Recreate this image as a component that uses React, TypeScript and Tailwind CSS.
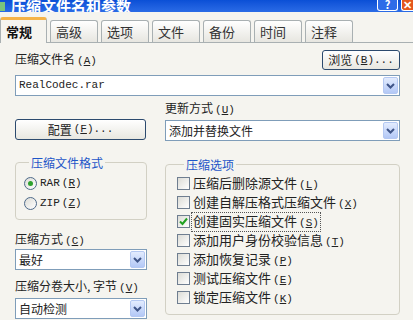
import React from "react";

const tabs = ["常规", "高级", "选项", "文件", "备份", "时间", "注释"];

const options: { label: string; k: string; checked?: boolean; focus?: boolean }[] = [
  { label: "压缩后删除源文件", k: "L" },
  { label: "创建自解压格式压缩文件", k: "X" },
  { label: "创建固实压缩文件", k: "S", checked: true, focus: true },
  { label: "添加用户身份校验信息", k: "T" },
  { label: "添加恢复记录", k: "P" },
  { label: "测试压缩文件", k: "E" },
  { label: "锁定压缩文件", k: "K" },
];

function Key({ k }: { k: string }) {
  return (
    <span className="ml-[2px] font-['Liberation_Mono',monospace] text-[11px]">
      (<span className="underline">{k}</span>)
    </span>
  );
}

function Chevron() {
  return (
    <svg width="9" height="6" viewBox="0 0 9 6">
      <path d="M1 1 L4.5 4.5 L8 1" fill="none" stroke="#3F5588" strokeWidth="2" />
    </svg>
  );
}

function Combo({ text, mono }: { text: string; mono?: boolean }) {
  return (
    <div className="flex h-[21px] items-center border border-[#7F9DB9] bg-white pl-[3px] pr-[1px]">
      <span
        className={
          "flex-1 truncate text-[#222] " +
          (mono ? "font-['Liberation_Mono',monospace] text-[11px]" : "text-[12px]")
        }
      >
        {text}
      </span>
      <span className="flex h-[17px] w-[15px] items-center justify-center rounded-[2px] border border-[#B4C8F2] bg-gradient-to-b from-[#E3ECFE] to-[#B3C8F6]">
        <Chevron />
      </span>
    </div>
  );
}

function XpButton({ label, k, className }: { label: string; k: string; className: string }) {
  return (
    <div
      className={
        "flex items-center justify-center rounded-[3px] border border-[#2C4A6E] bg-gradient-to-b from-white to-[#E8E7E0] text-[12px] text-[#222] " +
        className
      }
    >
      {label}
      <Key k={k} />
      <span className="font-['Liberation_Mono',monospace] text-[11px]">...</span>
    </div>
  );
}

function Radio({ label, k, on }: { label: string; k: string; on?: boolean }) {
  return (
    <div className="flex h-[20px] items-center">
      <span className="flex h-[13px] w-[13px] items-center justify-center rounded-full border border-[#4E6A8A] bg-gradient-to-br from-[#DCDCD6] to-white">
        {on && <span className="h-[5px] w-[5px] rounded-full bg-[#2EA12E]" />}
      </span>
      <span className="ml-[3px] font-['Liberation_Mono',monospace] text-[11px] text-[#222]">{label}</span>
      <Key k={k} />
    </div>
  );
}

function Check({ label, k, checked, focus }: { label: string; k: string; checked?: boolean; focus?: boolean }) {
  return (
    <div className="flex h-[19px] items-center">
      <span className="flex h-[13px] w-[13px] shrink-0 items-center justify-center border border-[#6F7E90] bg-gradient-to-br from-[#DCDCD6] to-white">
        {checked && (
          <svg width="9" height="9" viewBox="0 0 9 9">
            <path d="M1 4.5 L3.5 7 L8 1.5" fill="none" stroke="#21A121" strokeWidth="2" />
          </svg>
        )}
      </span>
      <span
        className={
          "ml-[2px] px-[1px] leading-[15px] " +
          (focus ? "outline outline-1 outline-dotted outline-[#555]" : "")
        }
      >
        {label}
        <Key k={k} />
      </span>
    </div>
  );
}

export default function App() {
  return (
    <div className="h-[320px] w-[413px] overflow-hidden bg-[#F5F4EF] font-['Noto_Sans_CJK_SC',sans-serif] text-[12px] text-[#222]">
      {/* title bar, cut at the top */}
      <div className="flex h-[12px] items-end overflow-hidden bg-gradient-to-b from-[#0A4FD6] to-[#2A6BE6]">
        <span className="mb-[1px] h-[9px] w-[5px] bg-[#7BC47B]" />
        <span className="-mb-[2px] ml-[6px] text-[15px] font-bold leading-[16px] text-white">压缩文件名和参数</span>
        <div className="ml-auto flex h-full items-start">
          <span className="flex h-[11px] w-[21px] items-end justify-center rounded-b-[3px] border border-t-0 border-white bg-[#2E6CE8] text-[11px] font-bold leading-[11px] text-white">
            ?
          </span>
          <span className="ml-[3px] flex h-[11px] w-[12px] items-end justify-center rounded-bl-[3px] border border-r-0 border-t-0 border-white bg-[#E4571D] text-[11px] font-bold leading-[11px] text-white">
            ✕
          </span>
        </div>
      </div>

      {/* tabs */}
      <div className="flex h-[31px] items-end gap-[3px] border-b border-[#A9B0B2]">
        {tabs.map((t, i) =>
          i === 0 ? (
            <div
              key={t}
              className="-mb-px flex h-[26px] w-[47px] items-center rounded-t-[3px] border-x border-t-[3px] border-[#A9B0B2] border-t-[#F5B347] bg-[#F5F4EF] pl-[5px] text-[13px] font-bold text-[#111]"
            >
              {t}
            </div>
          ) : (
            <div
              key={t}
              className="flex h-[22px] w-[48px] items-center rounded-t-[3px] border-x border-t border-[#A9B0B2] bg-gradient-to-b from-white to-[#E7E6E0] pl-[5px] text-[13px] text-[#333]"
            >
              {t}
            </div>
          )
        )}
      </div>

      {/* page */}
      <div className="pl-[15px] pr-[13px]">
        <div className="flex items-end justify-between pt-[7px]">
          <span className="mb-[2px] leading-[14px]">
            压缩文件名
            <Key k="A" />
          </span>
          <XpButton label="浏览" k="B" className="h-[20px] w-[78px]" />
        </div>
        <div className="mt-[5px]">
          <Combo text="RealCodec.rar" mono />
        </div>

        <div className="mt-[4px] flex gap-[18px]">
          {/* left column */}
          <div className="flex w-[132px] flex-col">
            <XpButton label="配置" k="F" className="mt-[19px] h-[21px] w-[131px]" />

            <fieldset className="mt-[16px] rounded-[4px] border border-[#D2D0C4] pb-[6px] pl-[8px]">
              <legend className="ml-[5px] px-[2px] leading-[13px] text-[#1E56C8]">压缩文件格式</legend>
              <div className="mt-[4px]">
                <Radio label="RAR" k="R" on />
                <Radio label="ZIP" k="Z" />
              </div>
            </fieldset>

            <span className="mt-[12px] leading-[14px]">
              压缩方式
              <Key k="C" />
            </span>
            <div className="mt-[1px]">
              <Combo text="最好" />
            </div>
            <span className="mt-[9px] leading-[14px]">
              压缩分卷大小, 字节
              <Key k="V" />
            </span>
            <div className="mt-[3px]">
              <Combo text="自动检测" />
            </div>
          </div>

          {/* right column */}
          <div className="flex flex-1 flex-col">
            <span className="leading-[16px]">
              更新方式
              <Key k="U" />
            </span>
            <div className="mt-[2px]">
              <Combo text="添加并替换文件" />
            </div>

            <fieldset className="mt-[17px] rounded-[4px] border border-[#D2D0C4] pb-[7px] pl-[11px]">
              <legend className="ml-[7px] px-[2px] leading-[13px] text-[#1E56C8]">压缩选项</legend>
              <div className="mt-[3px] text-[13px]">
                {options.map((o) => (
                  <Check key={o.k} label={o.label} k={o.k} checked={o.checked} focus={o.focus} />
                ))}
              </div>
            </fieldset>
          </div>
        </div>
      </div>
    </div>
  );
}
